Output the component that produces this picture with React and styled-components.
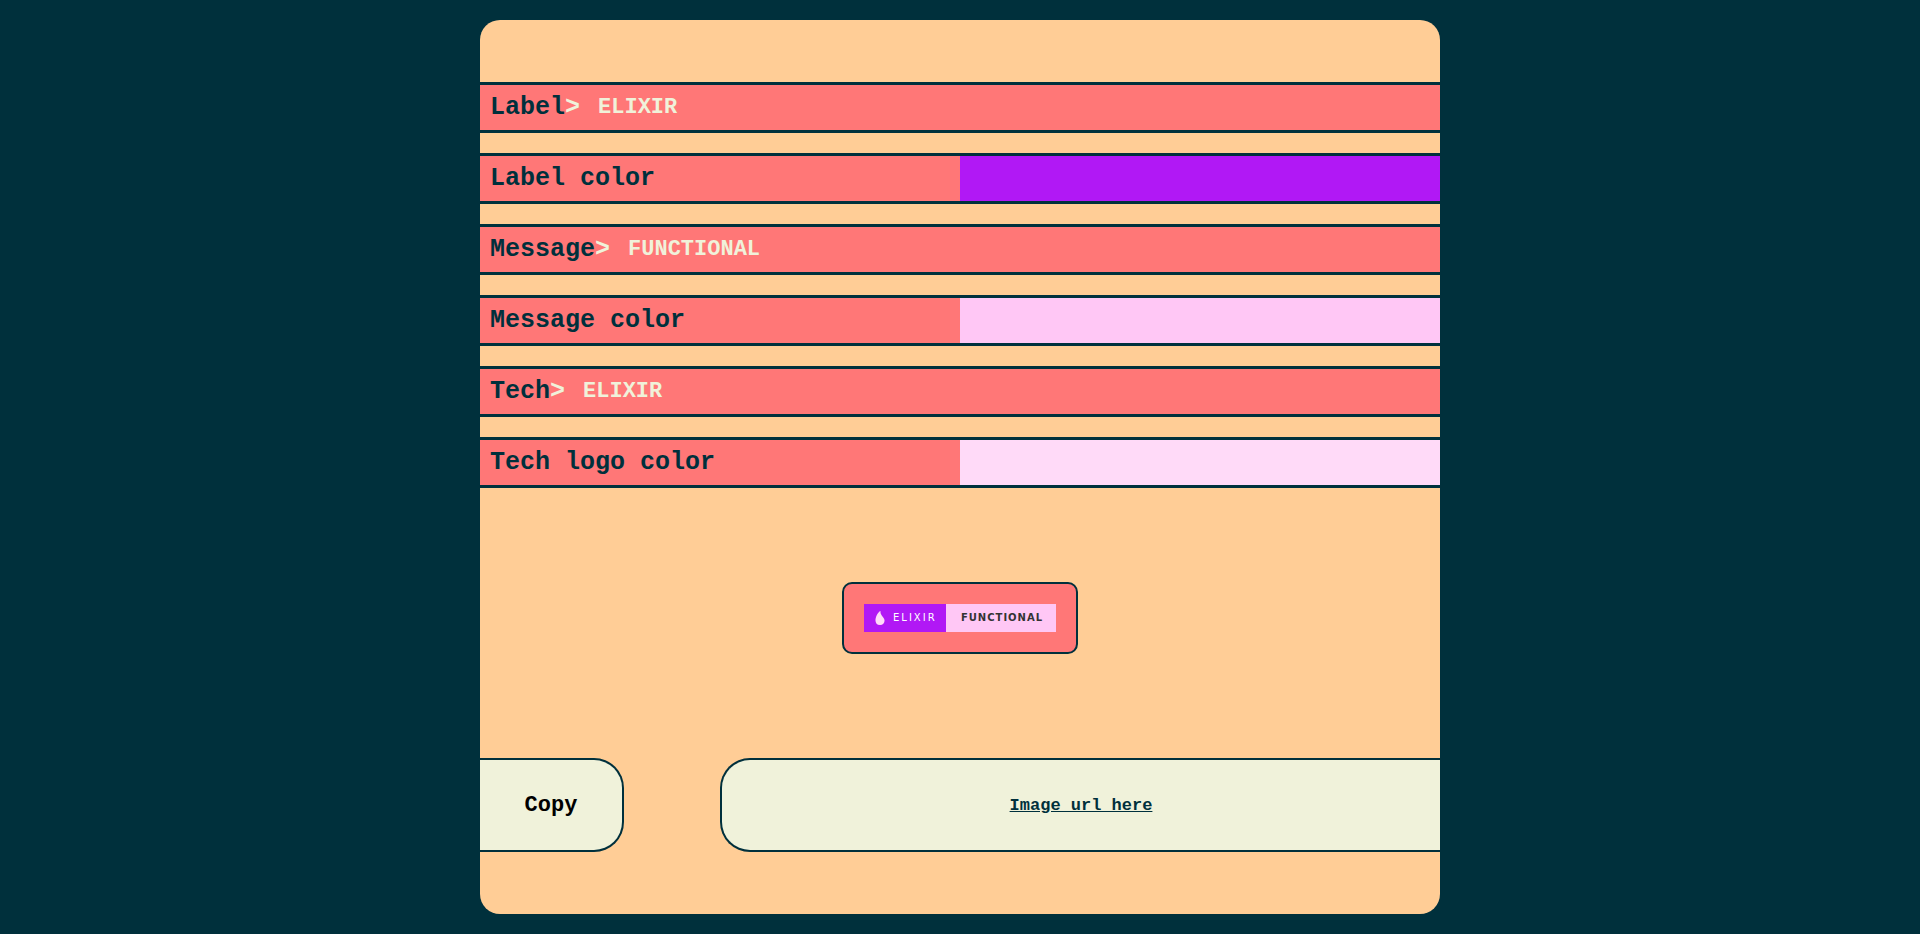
import React, { useState } from "react";
import styled, { createGlobalStyle } from "styled-components";

const colors = {
  ink: "#00303c",
  sand: "#ffcd96",
  coral: "#ff7777",
  cream: "#f0f2da",
};

const pixelFont = `"Liberation Mono", "DejaVu Sans Mono", monospace`;

const GlobalStyle = createGlobalStyle`
  *, *::before, *::after { box-sizing: border-box; }
  body {
    margin: 0;
    background: ${colors.ink};
    color: ${colors.ink};
    font-family: ${pixelFont};
  }
`;

const Page = styled.div`
  display: flex;
  justify-content: center;
  min-height: 100vh;
  padding: 20px 0;
`;

const Card = styled.main`
  display: flex;
  flex-direction: column;
  width: 50%;
  padding: 62px 0;
  background: ${colors.sand};
  border-radius: 20px;
`;

const Form = styled.form`
  display: flex;
  flex-direction: column;
  gap: 20px;
`;

const Row = styled.div`
  display: flex;
  align-items: stretch;
  height: 51px;
  background: ${colors.coral};
  border: solid ${colors.ink};
  border-width: 3px 0;
`;

const RowLabel = styled.label`
  display: flex;
  align-items: center;
  flex: ${({ $half }) => ($half ? "1 1 50%" : "none")};
  padding-left: 10px;
  font-size: 25px;
  font-weight: 700;
  line-height: 44px;
`;

const Prompt = styled.span`
  color: ${colors.cream};
`;

const TextField = styled.input`
  flex: 1;
  min-width: 0;
  padding: 0 18px;
  border: 0;
  outline: 0;
  background: transparent;
  color: ${colors.cream};
  font-family: inherit;
  font-size: 22px;
  font-weight: 700;
`;

const ColorField = styled.input`
  flex: 1 1 50%;
  min-width: 0;
  height: 100%;
  padding: 0;
  border: 0;
  background: transparent;
  cursor: pointer;

  &::-webkit-color-swatch-wrapper { padding: 0; }
  &::-webkit-color-swatch { border: 0; border-radius: 0; }
`;

const Preview = styled.section`
  display: flex;
  flex: 1;
  align-items: center;
  justify-content: center;
  padding: 20px 0 30px;
`;

const PreviewFrame = styled.div`
  padding: 20px;
  background: ${colors.coral};
  border: 2px solid ${colors.ink};
  border-radius: 10px;
`;

const Badge = styled.div`
  display: flex;
  height: 28px;
  font-family: "DejaVu Sans", sans-serif;
  font-size: 10px;
  line-height: 24px;
`;

const BadgeLabel = styled.span`
  display: flex;
  align-items: center;
  gap: 6px;
  width: 82px;
  padding-left: 9px;
  background: ${({ $color }) => $color};
  color: #fff;
  letter-spacing: 2px;
`;

const BadgeMessage = styled.span`
  display: flex;
  align-items: center;
  justify-content: center;
  width: 110px;
  padding-left: 2px;
  background: ${({ $color }) => $color};
  color: #333;
  font-weight: 700;
  letter-spacing: 1px;
`;

const Actions = styled.footer`
  display: flex;
  justify-content: space-between;
  height: 94px;
`;

const CopyButton = styled.button`
  width: 15%;
  padding: 0;
  background: ${colors.cream};
  border: 2px solid ${colors.ink};
  border-left: 0;
  border-radius: 0 30px 30px 0;
  color: #000;
  font-family: inherit;
  font-size: 22px;
  font-weight: 700;
  cursor: pointer;
`;

const UrlPanel = styled.div`
  display: flex;
  align-items: center;
  justify-content: center;
  width: 75%;
  background: ${colors.cream};
  border: 2px solid ${colors.ink};
  border-right: 0;
  border-radius: 30px 0 0 30px;
`;

const UrlLink = styled.a`
  color: ${colors.ink};
  font-size: 17px;
  font-weight: 700;
  text-decoration: underline;
`;

function ElixirDrop({ color }) {
  return (
    <svg width="14" height="14" viewBox="0 0 24 24" fill={color} aria-hidden="true">
      <path d="M19.793 16.575c0 3.752-2.927 7.426-7.743 7.426-5.249 0-7.843-3.71-7.843-8.29 0-5.21 3.892-12.952 8-15.647a.397.397 0 0 1 .61.371 9.716 9.716 0 0 0 1.694 6.518c.522.795 1.092 1.478 1.763 2.352.94 1.227 1.637 1.906 2.644 3.842l.015.028a7.107 7.107 0 0 1 .86 3.4z" />
    </svg>
  );
}

function TextRow({ id, label, value, onChange }) {
  return (
    <Row>
      <RowLabel htmlFor={id}>
        {label}
        <Prompt>&gt;</Prompt>
      </RowLabel>
      <TextField id={id} value={value} spellCheck={false} onChange={(e) => onChange(e.target.value)} />
    </Row>
  );
}

function ColorRow({ id, label, value, onChange }) {
  return (
    <Row>
      <RowLabel htmlFor={id} $half>{label}</RowLabel>
      <ColorField id={id} type="color" value={value} onChange={(e) => onChange(e.target.value)} />
    </Row>
  );
}

export default function App() {
  const [label, setLabel] = useState("ELIXIR");
  const [labelColor, setLabelColor] = useState("#b118f5");
  const [message, setMessage] = useState("FUNCTIONAL");
  const [messageColor, setMessageColor] = useState("#ffc7f5");
  const [tech, setTech] = useState("ELIXIR");
  const [logoColor, setLogoColor] = useState("#ffdaf8");

  return (
    <>
      <GlobalStyle />
      <Page>
        <Card>
          <Form onSubmit={(e) => e.preventDefault()}>
            <TextRow id="label" label="Label" value={label} onChange={setLabel} />
            <ColorRow id="label-color" label="Label color" value={labelColor} onChange={setLabelColor} />
            <TextRow id="message" label="Message" value={message} onChange={setMessage} />
            <ColorRow id="message-color" label="Message color" value={messageColor} onChange={setMessageColor} />
            <TextRow id="tech" label="Tech" value={tech} onChange={setTech} />
            <ColorRow id="logo-color" label="Tech logo color" value={logoColor} onChange={setLogoColor} />
          </Form>
          <Preview>
            <PreviewFrame>
              <Badge>
                <BadgeLabel $color={labelColor}>
                  <ElixirDrop color={logoColor} />
                  {label}
                </BadgeLabel>
                <BadgeMessage $color={messageColor}>{message}</BadgeMessage>
              </Badge>
            </PreviewFrame>
          </Preview>
          <Actions>
            <CopyButton type="button">Copy</CopyButton>
            <UrlPanel>
              <UrlLink href="#image">Image url here</UrlLink>
            </UrlPanel>
          </Actions>
        </Card>
      </Page>
    </>
  );
}
